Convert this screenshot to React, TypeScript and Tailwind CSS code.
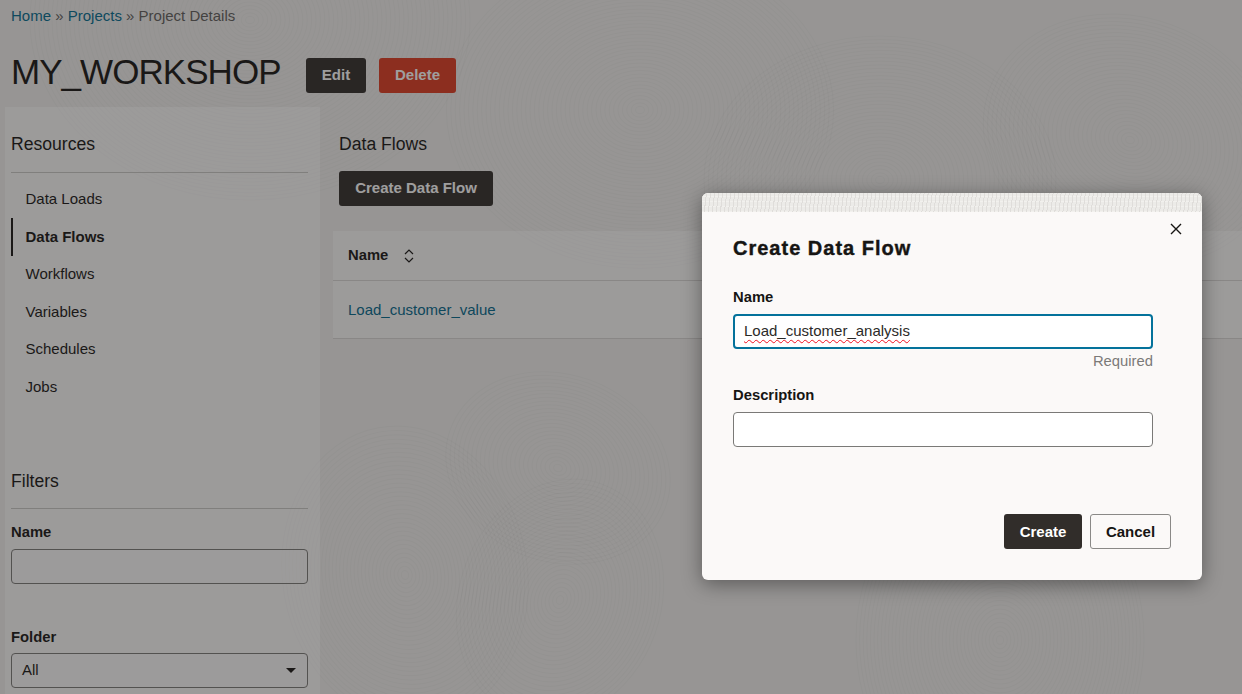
import React from "react";

const F = "font-['Liberation_Sans',Arial,sans-serif]";
const rings = (cx: number, cy: number, n: number, rot: number) =>
  Array.from({ length: n }, (_, i) => (
    <ellipse
      key={`${cx}-${cy}-${i}`}
      cx={cx}
      cy={cy}
      rx={(i + 1) * 4.4}
      ry={(i + 1) * 3.6}
      transform={`rotate(${rot} ${cx} ${cy})`}
      fill="none"
      stroke="#000000"
      strokeWidth="1.2"
      opacity={0.022}
    />
  ));

function Nav({ label, active }: { label: string; active?: boolean }) {
  return (
    <div className={`h-[37.6px] flex items-center ml-[6px] text-[15px] ${active ? "font-bold border-l-2 border-[#161513] pl-[12.5px]" : "pl-[14.5px]"}`}>
      {label}
    </div>
  );
}

export default function App() {
  return (
    <div className={`${F} relative w-[1242px] h-[694px] overflow-hidden bg-[#f1f0ee] text-[#161513]`}>
      <svg className="absolute inset-0" width="1242" height="694" aria-hidden="true">
        {rings(405, 575, 34, 80)}
        {rings(558, 468, 26, 20)}
        {rings(560, 600, 28, 110)}
        {rings(640, 110, 44, 0)}
        {rings(1000, 640, 40, 90)}
        {rings(1130, 140, 34, 20)}
        {rings(880, 180, 40, 0)}
        {rings(250, 20, 50, 0)}
      </svg>

      <div className="relative flex flex-col h-full">
        <div className="pl-[11px] pt-[7px] h-[46px] text-[15px] text-[#5f5e5c] leading-[17px]">
          <span className="text-[#006b8f]">Home</span> » <span className="text-[#006b8f]">Projects</span> » Project Details
        </div>
        <div className="flex items-center pl-[11px] h-[53px] mt-[3px]">
          <h1 className="text-[35px] leading-none font-normal w-[295px] mb-[9px] tracking-[-0.95px]">MY_WORKSHOP</h1>
          <button className="w-[60px] h-[35px] rounded-[3px] bg-[#312d2a] text-white text-[15px] font-bold">Edit</button>
          <button className="ml-[13px] w-[77px] h-[35px] rounded-[3px] bg-[#dd3a20] text-white text-[15px] font-bold">Delete</button>
        </div>

        <div className="flex flex-1 mt-[5px] pl-[5px] min-h-0">
          <aside className="w-[315px] bg-[#ffffff]/60 px-[6px] pt-[26px] shrink-0">
            <div className="text-[17.6px] leading-[22px] pb-[17px] border-b border-[#c9c8c6] mr-[6px]">Resources</div>
            <div className="mt-[7.4px] -ml-[6px]">
              <Nav label="Data Loads" />
              <Nav label="Data Flows" active />
              <Nav label="Workflows" />
              <Nav label="Variables" />
              <Nav label="Schedules" />
              <Nav label="Jobs" />
            </div>
            <div className="text-[17.6px] leading-[22px] pb-[16px] border-b border-[#c9c8c6] mr-[6px] mt-[64px]">Filters</div>
            <div className="mr-[6px]">
              <div className="text-[14.8px] font-bold mt-[15px] leading-[17px]">Name</div>
              <div className="mt-[8px] h-[35px] rounded-[4px] border border-[#7a7977] bg-white/20" />
              <div className="text-[14.8px] font-bold mt-[45px] leading-[17px]">Folder</div>
              <div className="mt-[7px] h-[35px] rounded-[4px] border border-[#7a7977] bg-white/20 flex items-center justify-between pl-[10px] pr-[11px] text-[15px]">
                <span>All</span>
                <svg width="10" height="5" viewBox="0 0 10 5"><path d="M0 0h10L5 5z" fill="#161513" /></svg>
              </div>
            </div>
          </aside>

          <main className="flex-1 pl-[13px] pt-[26px]">
            <div className="pl-[6px] text-[17.6px] leading-[22px]">Data Flows</div>
            <button className="ml-[6px] mt-[16px] block w-[154px] h-[35px] rounded-[3px] bg-[#312d2a] text-white text-[15px] font-bold">Create Data Flow</button>
            <div className="mt-[25px] bg-white/60">
              <div className="h-[50px] flex items-center pl-[15px] gap-[15px] border-b border-[#d8d7d5] text-[14.8px] font-bold">
                <span>Name</span>
                <svg width="12" height="16" viewBox="0 0 12 16" fill="none" stroke="#161513" strokeWidth="1.2"><path d="M2 6l4-4 4 4M2 10l4 4 4-4" /></svg>
              </div>
              <div className="h-[58px] flex items-center pl-[15px] pt-[1px] border-b border-[#d8d7d5] text-[15px] text-[#00688c]">Load_customer_value</div>
            </div>
          </main>
        </div>
      </div>

      <div className="absolute inset-0 bg-[rgba(33,31,29,0.43)]" />

      <div className="absolute left-[702px] top-[193px] w-[500px] h-[387px] rounded-[6px] bg-[#fbf9f8] overflow-hidden shadow-[0_4px_20px_rgba(0,0,0,0.4)]">
        <div className="h-[19px] bg-[#ecebe8] bg-[repeating-linear-gradient(97deg,#dfddda_0px,#dfddda_1px,transparent_1px,transparent_4px),repeating-linear-gradient(0deg,#f2f1ee_0px,#f2f1ee_1px,transparent_1px,transparent_5px)]" />
        <button className="absolute right-[19px] top-[29px] text-[#161513]" aria-label="Close">
          <svg width="14" height="14" viewBox="0 0 14 14" fill="none" stroke="currentColor" strokeWidth="1.4"><path d="M2 2l10 10M12 2L2 12" /></svg>
        </button>
        <div className="px-[31px]">
          <h2 className="mt-[24px] text-[20px] leading-[24px] font-bold tracking-[1px] [-webkit-text-stroke:0.4px_#161513]">Create Data Flow</h2>
          <div className="mt-[29px] text-[14.8px] font-bold leading-[17px]">Name</div>
          <div className="mt-[8px] w-[420px] h-[35px] rounded-[4px] border-2 border-[#04729b] bg-white flex items-center pl-[9px] text-[15px] text-[#2b2a28]">
            <span className="underline decoration-wavy decoration-[#f01020] decoration-[1.2px] underline-offset-[3px]">Load_customer_analysis</span>
          </div>
          <div className="w-[420px] text-right text-[14.8px] text-[#7b7a78] leading-[17px] mt-[4px]">Required</div>
          <div className="mt-[17px] text-[14.8px] font-bold leading-[17px]">Description</div>
          <div className="mt-[8px] w-[420px] h-[35px] rounded-[4px] border border-[#7a7977] bg-white" />
        </div>
        <div className="absolute right-[31px] bottom-[31px] flex gap-[8px]">
          <button className="w-[78px] h-[35px] pt-[1px] rounded-[3px] bg-[#312d2a] text-white text-[15px] font-bold">Create</button>
          <button className="w-[81px] h-[35px] pt-[1px] rounded-[3px] border border-[#8a8987] text-[15px] font-bold text-[#161513]">Cancel</button>
        </div>
      </div>
    </div>
  );
}
